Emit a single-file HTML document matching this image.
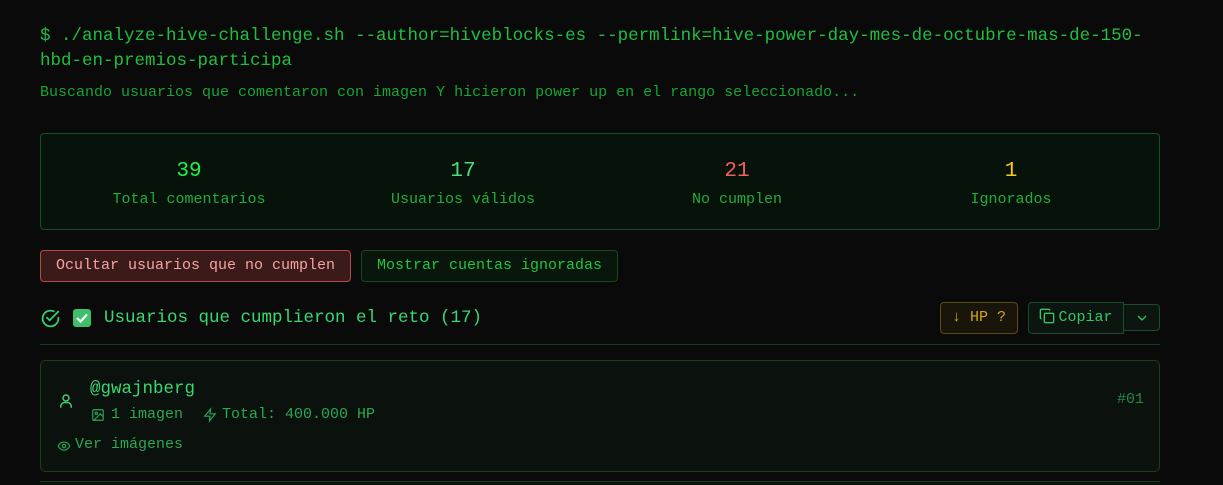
<!DOCTYPE html>
<html><head><meta charset="utf-8"><style>
*{box-sizing:border-box;margin:0;padding:0}
body{width:1223px;height:483px;overflow:hidden;background:#0a0a0a;font-family:"Liberation Mono","DejaVu Sans Mono",monospace;color:#22c55e;position:relative}
.a{position:absolute;white-space:nowrap}
.cmd{left:40px;top:24px;font-size:17.5px;line-height:25px;color:#1fbf3f}
.sub{left:40px;top:84px;font-size:15px;color:#17a534}
.stats{left:40px;top:133px;width:1120px;height:97px;border:1px solid #164d22;border-radius:4px;background:#07130a}
.st{position:absolute;top:25px;width:274px;text-align:center}
.st b{display:block;font-weight:normal;font-size:21px;line-height:26px}
.st span{display:block;font-size:15px;color:#1fae3c;margin-top:6px}
.btn{position:absolute;height:32px;border-radius:4px;font-size:15px;line-height:30px;text-align:center}
.card{left:40px;top:360px;width:1120px;height:112px;border:1px solid #17401f;border-radius:5px;background:#0b110d}
</style></head><body>
<div class="a cmd">$ ./analyze-hive-challenge.sh --author=hiveblocks-es --permlink=hive-power-day-mes-de-octubre-mas-de-150-<br>hbd-en-premios-participa</div>
<div class="a sub">Buscando usuarios que comentaron con imagen Y hicieron power up en el rango seleccionado...</div>
<div class="a stats">
 <div class="st" style="left:11px"><b style="color:#22f04a">39</b><span>Total comentarios</span></div>
 <div class="st" style="left:285px"><b style="color:#4ade80">17</b><span>Usuarios válidos</span></div>
 <div class="st" style="left:559px"><b style="color:#f16060">21</b><span>No cumplen</span></div>
 <div class="st" style="left:833px"><b style="color:#facc15">1</b><span>Ignorados</span></div>
</div>
<div class="btn" style="left:40px;top:250px;width:311px;background:#3b1a1a;border:1px solid #b44a4a;color:#f6a3a3">Ocultar usuarios que no cumplen</div>
<div class="btn" style="left:361px;top:250px;width:257px;background:#08160b;border:1px solid #154a20;color:#1fc543">Mostrar cuentas ignoradas</div>
<svg class="a" style="left:40px;top:308px" width="21" height="21" viewBox="0 0 24 24" fill="none" stroke="#34d36a" stroke-width="2" stroke-linecap="round"><path d="M21 11v1a9 9 0 1 1-5.3-8.2"/><path d="M8 11l3 3 10-10"/></svg>
<div class="a" style="left:73px;top:309px;width:18px;height:18px;background:#3fbf6a;border-radius:3px"><svg width="18" height="18" viewBox="0 0 18 18"><path d="M4 9l3.5 3.5L14 5.5" fill="none" stroke="#fff" stroke-width="2.2"/></svg></div>
<div class="a" style="left:104px;top:306px;font-size:17.5px;line-height:24px;color:#3ad872">Usuarios que cumplieron el reto (17)</div>
<div class="btn" style="left:940px;top:302px;width:78px;background:#1a150a;border:1px solid #5a4a14;color:#d4a514;font-size:15px">↓ HP ?</div>
<div class="btn" style="left:1028px;top:302px;width:96px;background:#0c150f;border:1px solid #1b4d28;color:#34c864;border-radius:4px 0 0 4px"><svg style="vertical-align:-3px;margin-right:3px" width="16" height="16" viewBox="0 0 24 24" fill="none" stroke="#34c864" stroke-width="2"><rect x="8" y="8" width="14" height="14" rx="2"/><path d="M4 16c-1.1 0-2-.9-2-2V4c0-1.1.9-2 2-2h10c1.1 0 2 .9 2 2"/></svg>Copiar</div>
<div class="btn" style="left:1124px;top:304px;width:36px;height:27px;background:#0c150f;border:1px solid #1b4d28;border-left:none;border-radius:0 4px 4px 0"><svg style="margin-top:7px" width="12" height="10" viewBox="0 0 12 10"><path d="M2 3l4 4 4-4" fill="none" stroke="#34c864" stroke-width="1.3"/></svg></div>
<div class="a" style="left:40px;top:344px;width:1120px;height:1px;background:#173d21"></div>
<div class="a card"></div>
<svg class="a" style="left:57px;top:392px" width="18" height="18" viewBox="0 0 24 24" fill="none" stroke="#3fcf6a" stroke-width="2"><circle cx="12" cy="8" r="4"/><path d="M5 21v-2a5 5 0 0 1 5-5h4a5 5 0 0 1 5 5v2"/></svg>
<div class="a" style="left:90px;top:377px;font-size:17.5px;line-height:24px;color:#3ad872">@gwajnberg</div>
<svg class="a" style="left:91px;top:408px" width="14" height="14" viewBox="0 0 24 24" fill="none" stroke="#2aa852" stroke-width="2"><rect x="3" y="3" width="18" height="18" rx="2"/><circle cx="9" cy="9" r="2"/><path d="M21 15l-5-5L5 21"/></svg>
<div class="a" style="left:111px;top:406px;font-size:15px;color:#2aa852">1 imagen</div>
<svg class="a" style="left:203px;top:407px" width="14" height="16" viewBox="0 0 24 24" fill="none" stroke="#2aa852" stroke-width="2"><path d="M13 2L3 14h9l-1 8 10-12h-9l1-8z"/></svg>
<div class="a" style="left:222px;top:406px;font-size:15px;color:#2aa852">Total: 400.000 HP</div>
<svg class="a" style="left:57px;top:439px" width="14" height="14" viewBox="0 0 24 24" fill="none" stroke="#2aa852" stroke-width="2"><path d="M2 12s3.5-7 10-7 10 7 10 7-3.5 7-10 7S2 12 2 12z"/><circle cx="12" cy="12" r="3"/></svg>
<div class="a" style="left:75px;top:436px;font-size:15px;color:#2aa852">Ver imágenes</div>
<div class="a" style="left:1117px;top:391px;font-size:15px;color:#238a46">#01</div>
<div class="a" style="left:40px;top:481px;width:1120px;height:4px;border-top:1px solid #17401f;background:#0b110d"></div>
</body></html>
